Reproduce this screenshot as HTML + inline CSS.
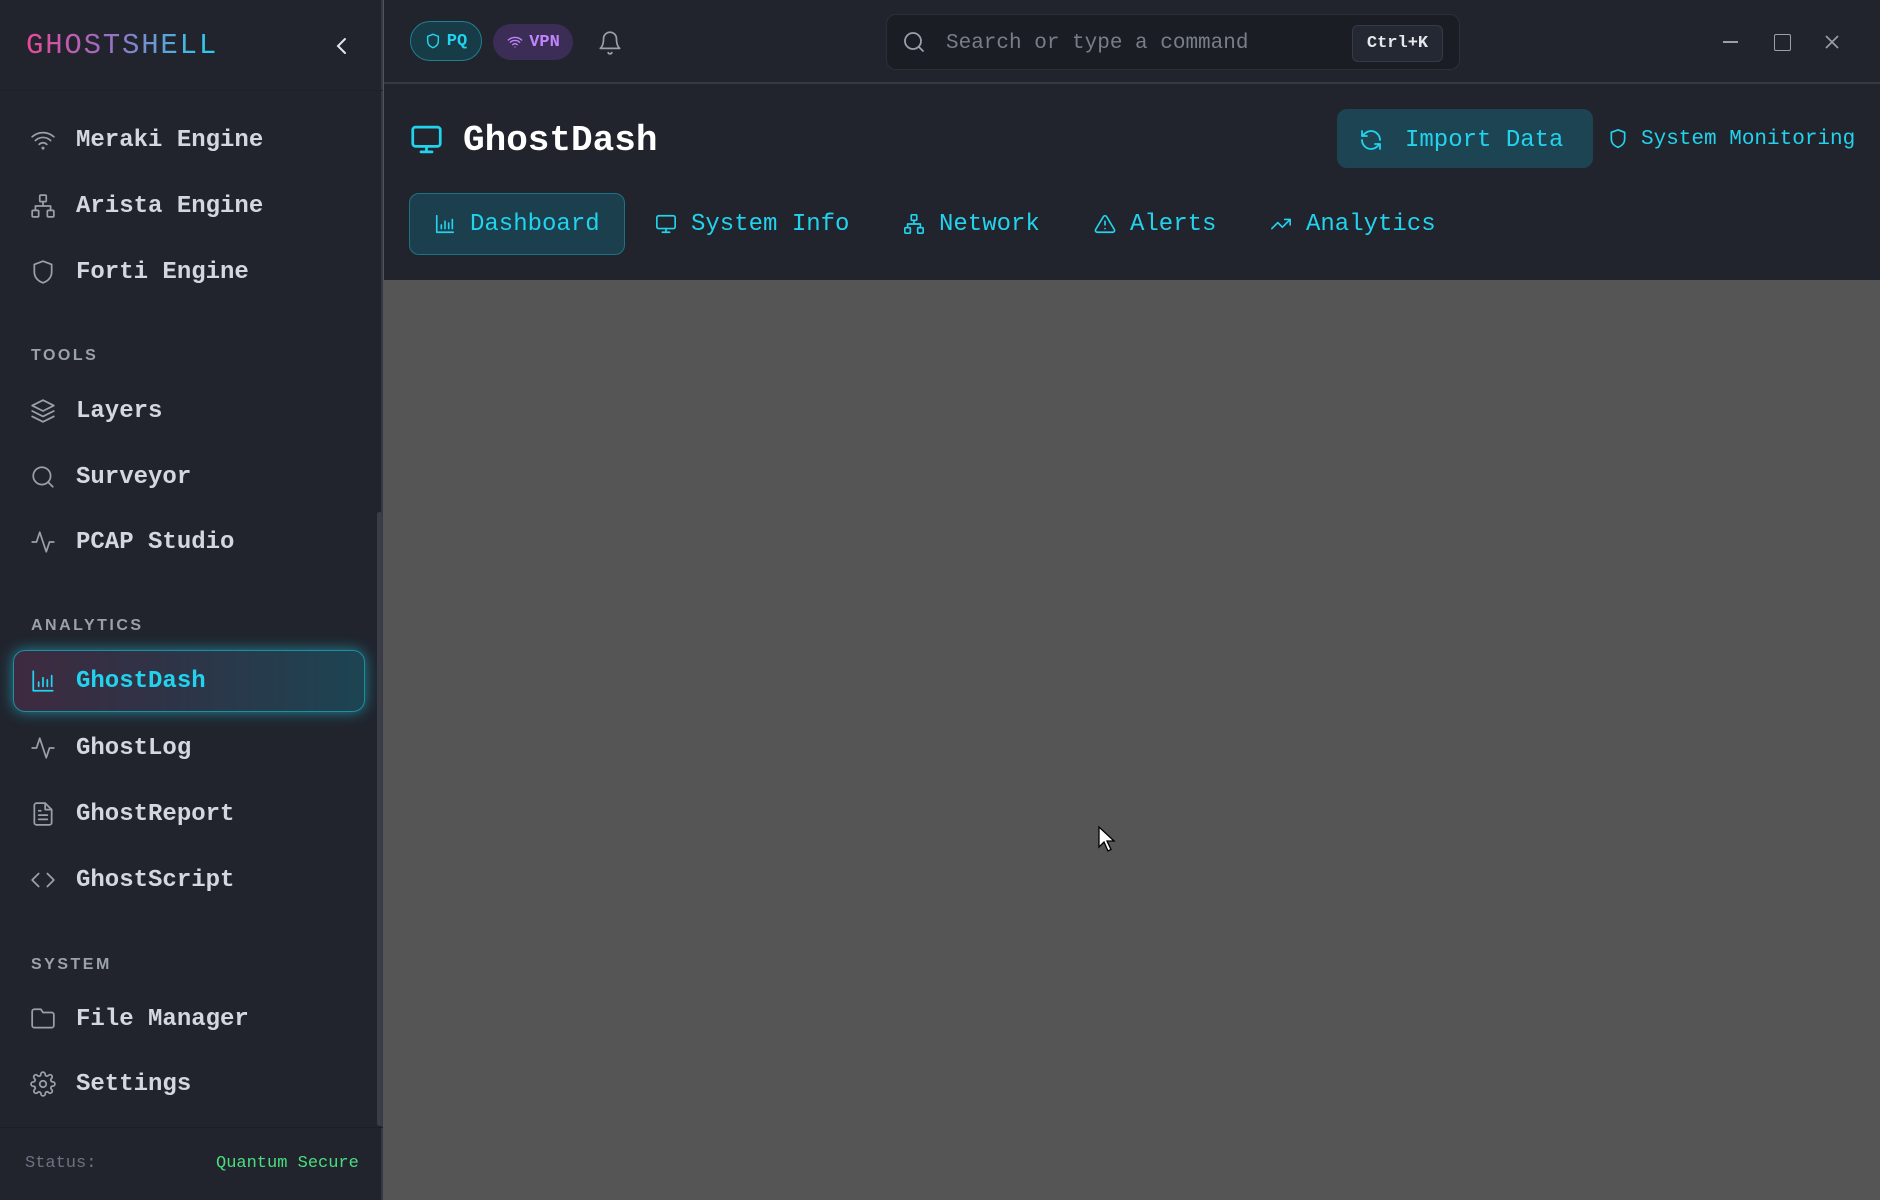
<!DOCTYPE html>
<html><head><meta charset="utf-8"><style>
*{margin:0;padding:0;box-sizing:border-box}
body{width:1880px;height:1200px;overflow:hidden;background:#555555;font-family:"Liberation Mono",monospace;position:relative}
.abs{position:absolute}
svg{display:block}
#side{left:0;top:0;width:383px;height:1200px;background:#21242d;border-right:2px solid #363943}
#top{left:384px;top:0;width:1496px;height:84px;background:#21242d;border-bottom:2px solid #363943}
#head{left:384px;top:84px;width:1496px;height:196px;background:#21242d}
.nav{position:absolute;left:30px;height:40px;display:flex;align-items:center;color:#d4d7de;font-size:24px;font-weight:bold}
.nav svg{width:26px;height:26px;margin-right:20px;stroke:#9aa0aa;fill:none;stroke-width:1.6;stroke-linecap:round;stroke-linejoin:round}
.sec{position:absolute;left:31px;font-size:16px;font-weight:bold;color:#9ba1ab;letter-spacing:2.5px;font-family:"Liberation Sans",sans-serif}
.tab{position:absolute;top:193px;height:62px;display:flex;align-items:center;color:#22d3ee;font-size:24px}
.tab svg{width:22px;height:22px;margin-right:14px;stroke:#22d3ee;fill:none;stroke-width:1.8;stroke-linecap:round;stroke-linejoin:round}
</style></head><body>
<div id="side" class="abs">
  <div class="abs" style="left:26px;top:29px;font-size:29px;letter-spacing:1.8px;background:linear-gradient(90deg,#ec4899,#a06bc0 40%,#22d3ee);-webkit-background-clip:text;background-clip:text;color:transparent">GHOSTSHELL</div>
  <svg class="abs" style="left:333px;top:36px" width="18" height="20" viewBox="0 0 18 20"><path d="M12 3L5 10l7 7" stroke="#e5e7eb" stroke-width="2" fill="none" stroke-linecap="round"/></svg>
  <div class="abs" style="left:0;top:90px;width:383px;height:1px;background:#1d2028"></div>

  <div class="nav" style="top:120px"><svg viewBox="0 0 24 24"><path d="M2 9a15 15 0 0 1 20 0M5 12.5a10 10 0 0 1 14 0M8.5 16a5 5 0 0 1 7 0"/><circle cx="12" cy="19.5" r=".6"/></svg>Meraki Engine</div>
  <div class="nav" style="top:186px"><svg viewBox="0 0 24 24"><rect x="9" y="2" width="6" height="6" rx="1"/><rect x="2" y="16" width="6" height="6" rx="1"/><rect x="16" y="16" width="6" height="6" rx="1"/><path d="M5 16v-4h14v4M12 8v4"/></svg>Arista Engine</div>
  <div class="nav" style="top:252px"><svg viewBox="0 0 24 24"><path d="M12 2l8 3v7c0 5-3.5 8.5-8 10-4.5-1.5-8-5-8-10V5z"/></svg>Forti Engine</div>

  <div class="sec" style="top:347px">TOOLS</div>
  <div class="nav" style="top:391px"><svg viewBox="0 0 24 24"><path d="M12 2L2 7l10 5 10-5zM2 12l10 5 10-5M2 17l10 5 10-5"/></svg>Layers</div>
  <div class="nav" style="top:457px"><svg viewBox="0 0 24 24"><circle cx="11" cy="11" r="8"/><path d="M21 21l-4.3-4.3"/></svg>Surveyor</div>
  <div class="nav" style="top:522px"><svg viewBox="0 0 24 24"><path d="M22 12h-4l-3 9L9 3l-3 9H2"/></svg>PCAP Studio</div>

  <div class="sec" style="top:617px">ANALYTICS</div>
  <div class="abs" style="left:13px;top:650px;width:352px;height:62px;border-radius:12px;background:linear-gradient(90deg,#3e2a40,#2e3447 45%,#1d4452);border:1.5px solid #1d8fa3;box-shadow:0 0 14px rgba(34,211,238,.55)"></div>
  <div class="nav" style="top:661px;color:#22d3ee"><svg viewBox="0 0 24 24" style="stroke:#22d3ee"><path d="M3 3v18h18M8 17v-4M12 17V9M16 17v-6M20 17V7"/></svg>GhostDash</div>
  <div class="nav" style="top:728px"><svg viewBox="0 0 24 24"><path d="M22 12h-4l-3 9L9 3l-3 9H2"/></svg>GhostLog</div>
  <div class="nav" style="top:794px"><svg viewBox="0 0 24 24"><path d="M14 2H6a2 2 0 0 0-2 2v16a2 2 0 0 0 2 2h12a2 2 0 0 0 2-2V8z"/><path d="M14 2v6h6M8 13h8M8 17h8M8 9h2"/></svg>GhostReport</div>
  <div class="nav" style="top:860px"><svg viewBox="0 0 24 24"><path d="M16 18l6-6-6-6M8 6l-6 6 6 6"/></svg>GhostScript</div>

  <div class="sec" style="top:956px">SYSTEM</div>
  <div class="nav" style="top:999px"><svg viewBox="0 0 24 24"><path d="M20 20a2 2 0 0 0 2-2V8a2 2 0 0 0-2-2h-8l-2-3H4a2 2 0 0 0-2 2v13a2 2 0 0 0 2 2z"/></svg>File Manager</div>
  <div class="nav" style="top:1064px"><svg viewBox="0 0 24 24"><circle cx="12" cy="12" r="3"/><path d="M19.4 15a1.7 1.7 0 0 0 .3 1.8l.1.1a2 2 0 1 1-2.8 2.8l-.1-.1a1.7 1.7 0 0 0-1.8-.3 1.7 1.7 0 0 0-1 1.5V21a2 2 0 1 1-4 0v-.1a1.7 1.7 0 0 0-1.1-1.5 1.7 1.7 0 0 0-1.800.3l-.1.1a2 2 0 1 1-2.8-2.8l.1-.1a1.7 1.7 0 0 0 .3-1.8 1.7 1.7 0 0 0-1.5-1H3a2 2 0 1 1 0-4h.1a1.7 1.7 0 0 0 1.5-1.1 1.7 1.7 0 0 0-.3-1.8l-.1-.1a2 2 0 1 1 2.8-2.8l.1.1a1.7 1.7 0 0 0 1.8.3H9a1.7 1.7 0 0 0 1-1.5V3a2 2 0 1 1 4 0v.1a1.7 1.7 0 0 0 1 1.5 1.7 1.7 0 0 0 1.8-.3l.1-.1a2 2 0 1 1 2.8 2.8l-.1.1a1.7 1.7 0 0 0-.3 1.8V9a1.7 1.7 0 0 0 1.5 1H21a2 2 0 1 1 0 4h-.1a1.7 1.7 0 0 0-1.5 1z"/></svg>Settings</div>

  <div class="abs" style="left:377px;top:512px;width:5px;height:614px;background:#3a3d47;border-radius:3px"></div>
  <div class="abs" style="left:0;top:1127px;width:383px;height:1px;background:#1b1e25"></div>
  <div class="abs" style="left:25px;top:1154px;font-size:17px;color:#6b7280">Status:</div>
  <div class="abs" style="left:216px;top:1154px;font-size:17px;color:#4ade80">Quantum Secure</div>
</div>

<div id="top" class="abs">
  <div class="abs" style="left:26px;top:21px;width:72px;height:40px;border-radius:20px;background:#173c47;border:1.5px solid #1d7f90;display:flex;align-items:center;justify-content:center;color:#22d3ee;font-size:17px;font-weight:bold"><svg width="16" height="16" viewBox="0 0 24 24" style="margin-right:6px"><path d="M12 2l8 3v7c0 5-3.5 8.5-8 10-4.5-1.5-8-5-8-10V5z" stroke="#22d3ee" stroke-width="2.2" fill="none"/></svg>PQ</div>
  <div class="abs" style="left:109px;top:24px;width:80px;height:36px;border-radius:18px;background:#3b2d55;display:flex;align-items:center;justify-content:center;color:#c084fc;font-size:17px;font-weight:bold"><svg width="18" height="16" viewBox="0 0 24 24" style="margin-right:5px"><path d="M2 9a15 15 0 0 1 20 0M5 12.5a10 10 0 0 1 14 0M8.5 16a5 5 0 0 1 7 0" stroke="#c084fc" stroke-width="2" fill="none" stroke-linecap="round"/><circle cx="12" cy="19.5" r="1" fill="#c084fc"/></svg>VPN</div>
  <svg class="abs" style="left:213px;top:29px" width="26" height="28" viewBox="0 0 24 26"><path d="M6 9a6 6 0 0 1 12 0c0 7 3 9 3 9H3s3-2 3-9M10.3 22a1.9 1.9 0 0 0 3.4 0" stroke="#9aa0aa" stroke-width="1.6" fill="none" stroke-linecap="round" stroke-linejoin="round"/></svg>
  <div class="abs" style="left:502px;top:14px;width:574px;height:56px;border-radius:10px;background:#1b1d24;border:1px solid #2c2f38"></div>
  <svg class="abs" style="left:518px;top:30px" width="24" height="24" viewBox="0 0 24 24"><circle cx="11" cy="11" r="8" stroke="#9aa0aa" stroke-width="1.8" fill="none"/><path d="M21 21l-4.3-4.3" stroke="#9aa0aa" stroke-width="1.8" stroke-linecap="round"/></svg>
  <div class="abs" style="left:562px;top:32px;font-size:21px;color:#787e88">Search or type a command</div>
  <div class="abs" style="left:968px;top:25px;width:91px;height:37px;border-radius:6px;background:#232833;border:1px solid #363a45;color:#e5e7eb;font-size:17px;font-weight:bold;display:flex;align-items:center;justify-content:center">Ctrl+K</div>
  <div class="abs" style="left:1339px;top:41px;width:15px;height:2px;background:#9aa0aa"></div>
  <div class="abs" style="left:1390px;top:34px;width:17px;height:17px;border:1.6px solid #9aa0aa;border-radius:2px"></div>
  <svg class="abs" style="left:1440px;top:34px" width="16" height="16" viewBox="0 0 16 16"><path d="M2 2l12 12M14 2L2 14" stroke="#9aa0aa" stroke-width="1.6"/></svg>
</div>

<div id="head" class="abs">
  <svg class="abs" style="left:25px;top:39px" width="35" height="33" viewBox="0 0 24 24"><rect x="2" y="3" width="20" height="14" rx="2" stroke="#22d3ee" stroke-width="2" fill="none"/><path d="M8 21h8M12 17v4" stroke="#22d3ee" stroke-width="2" stroke-linecap="round"/></svg>
  <div class="abs" style="left:79px;top:36px;font-size:36px;font-weight:bold;color:#fff">GhostDash</div>
  <div class="abs" style="left:953px;top:25px;width:256px;height:59px;border-radius:10px;background:#1d4452;display:flex;align-items:center;padding-top:3px;color:#22d3ee;font-size:24px"><svg width="24" height="24" viewBox="0 0 24 24" style="margin:0 22px 0 22px"><path d="M21 12a9 9 0 0 0-15.5-6.2L3 8M3 3v5h5M3 12a9 9 0 0 0 15.5 6.2L21 16M21 21v-5h-5" stroke="#22d3ee" stroke-width="1.8" fill="none" stroke-linecap="round" stroke-linejoin="round"/></svg>Import Data</div>
  <svg class="abs" style="left:1224px;top:43px" width="20" height="24" viewBox="0 0 24 26"><path d="M12 2l8 3v8c0 5-3.5 8.5-8 10-4.5-1.5-8-5-8-10V5z" stroke="#22d3ee" stroke-width="2" fill="none"/></svg>
  <div class="abs" style="left:1257px;top:44px;font-size:21px;color:#22d3ee">System Monitoring</div>
</div>

<div class="abs" style="left:409px;top:193px;width:216px;height:62px;border-radius:10px;background:#1c3f4d;border:1.5px solid #1d7385"></div>
<div class="tab" style="left:434px"><svg viewBox="0 0 24 24"><path d="M3 3v18h18M8 17v-4M12 17V9M16 17v-6M20 17V7"/></svg>Dashboard</div>
<div class="tab" style="left:655px"><svg viewBox="0 0 24 24"><rect x="2" y="3" width="20" height="14" rx="2"/><path d="M8 21h8M12 17v4"/></svg>System Info</div>
<div class="tab" style="left:903px"><svg viewBox="0 0 24 24"><rect x="9" y="2" width="6" height="6" rx="1"/><rect x="2" y="16" width="6" height="6" rx="1"/><rect x="16" y="16" width="6" height="6" rx="1"/><path d="M5 16v-4h14v4M12 8v4"/></svg>Network</div>
<div class="tab" style="left:1094px"><svg viewBox="0 0 24 24"><path d="M10.3 3.9L1.8 18a2 2 0 0 0 1.7 3h17a2 2 0 0 0 1.7-3L13.7 3.9a2 2 0 0 0-3.4 0zM12 9v4M12 17h.01"/></svg>Alerts</div>
<div class="tab" style="left:1270px"><svg viewBox="0 0 24 24"><path d="M22 7l-8.5 8.5-5-5L2 17M16 7h6v6"/></svg>Analytics</div>

<svg class="abs" style="left:1097px;top:825px" width="20" height="28" viewBox="0 0 20 28"><path d="M2 2v20l5-5 4 9 3-1.5-4-8.5h7z" fill="#fff" stroke="#000" stroke-width="1.3"/></svg>
</body></html>
